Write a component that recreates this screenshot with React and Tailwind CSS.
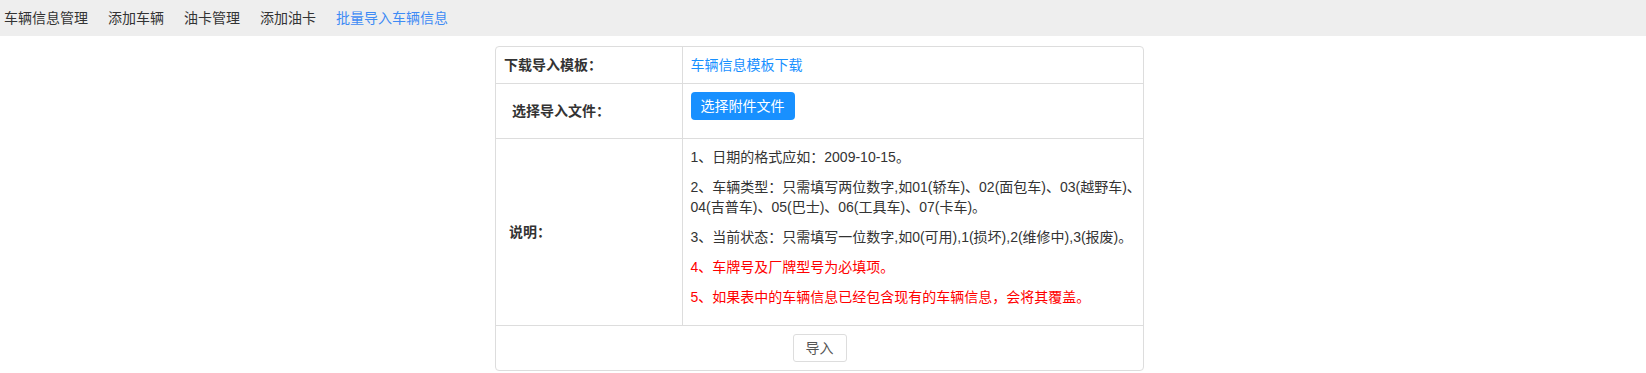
export default function App() {
  const navItems = ["车辆信息管理", "添加车辆", "油卡管理", "添加油卡", "批量导入车辆信息"];

  return (
    <div className="min-h-screen bg-white text-[14px] leading-5 text-[#333]" style={{ fontFamily: '"Liberation Sans", "Noto Sans CJK SC", sans-serif' }}>
      <nav className="flex h-9 items-center bg-[#eeeeee] pl-1">
        {navItems.map((item, i) => (
          <a
            key={item}
            className={
              "mr-5 cursor-pointer " +
              (i === navItems.length - 1 ? "text-[#3e8bf5]" : "text-[#333]")
            }
          >
            {item}
          </a>
        ))}
      </nav>

      <div className="mt-[10px] ml-[495px] w-[649px] overflow-hidden rounded border border-[#dddddd]">
        <table className="w-full table-fixed border-collapse">
          <tbody>
            <tr className="border-b border-[#dddddd]">
              <td className="w-[186px] border-r border-[#dddddd] py-2 pl-2 font-bold">下载导入模板：</td>
              <td className="py-2 pl-2">
                <a className="cursor-pointer text-[#1890ff]">车辆信息模板下载</a>
              </td>
            </tr>
            <tr className="border-b border-[#dddddd]">
              <td className="border-r border-[#dddddd] py-2 pl-4 font-bold">选择导入文件：</td>
              <td className="py-2 pl-2">
                <div className="mb-[10px]">
                  <button className="h-7 w-[104px] rounded-sm bg-[#1890ff] text-white">选择附件文件</button>
                </div>
              </td>
            </tr>
            <tr className="border-b border-[#dddddd]">
              <td className="border-r border-[#dddddd] py-2 pl-[13px] font-bold">说明：</td>
              <td className="px-2 pt-2 pb-2">
                <p className="mb-[10px]">1、日期的格式应如：2009-10-15。</p>
                <p className="mb-[10px] whitespace-nowrap">
                  2、车辆类型：只需填写两位数字,如01(轿车)、02(面包车)、03(越野车)、
                  <br />
                  04(吉普车)、05(巴士)、06(工具车)、07(卡车)。
                </p>
                <p className="mb-[10px]">3、当前状态：只需填写一位数字,如0(可用),1(损坏),2(维修中),3(报废)。</p>
                <p className="mb-[10px] text-[#ff0000]">4、车牌号及厂牌型号为必填项。</p>
                <p className="mb-[10px] text-[#ff0000]">5、如果表中的车辆信息已经包含现有的车辆信息，会将其覆盖。</p>
              </td>
            </tr>
            <tr>
              <td colSpan={2} className="py-2 text-center">
                <button className="h-7 rounded-[3px] border border-[#dddddd] bg-white px-3 text-[#555]">导入</button>
              </td>
            </tr>
          </tbody>
        </table>
      </div>
    </div>
  );
}
